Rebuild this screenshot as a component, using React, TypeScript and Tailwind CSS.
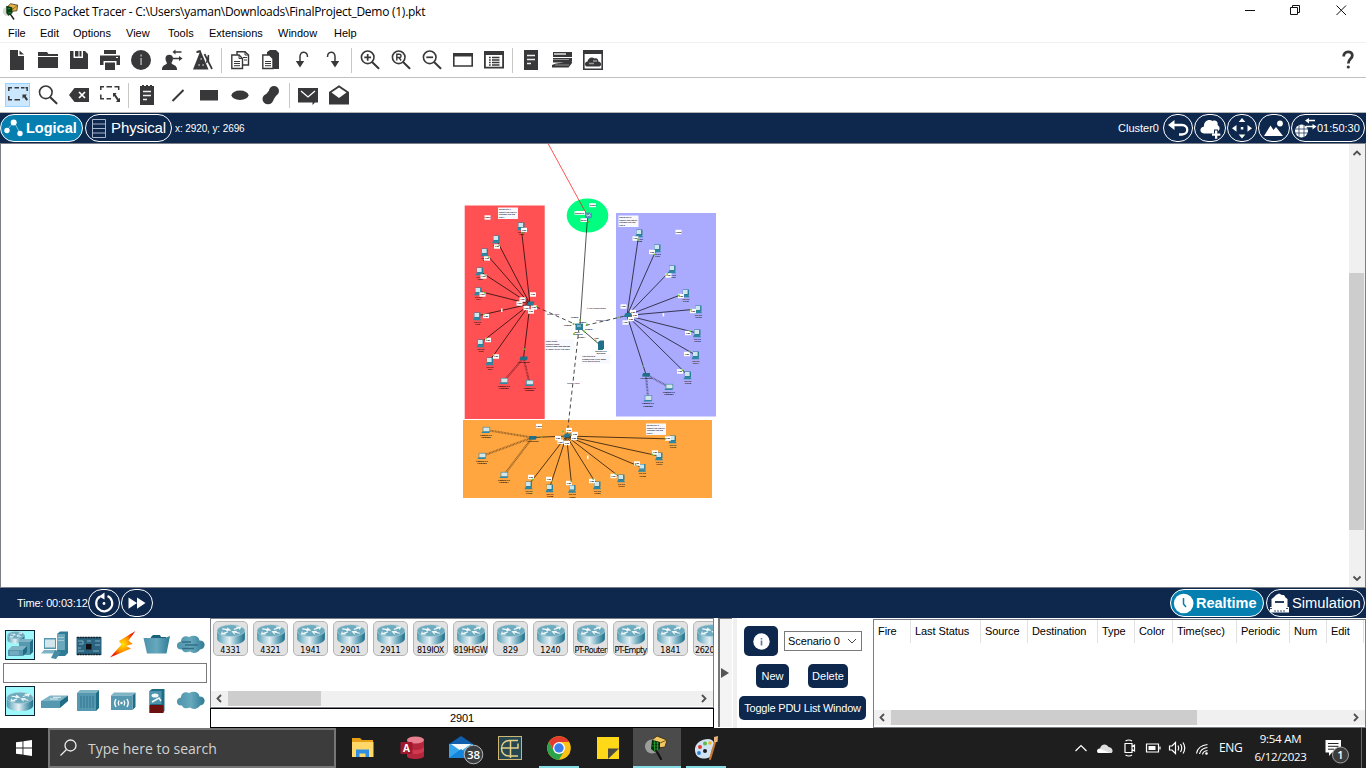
import React from "react";

const INK = "#38383a";

type IconProps = { children: React.ReactNode; className?: string };

/* 31x34 toolbar slot, one drawing unit per pixel */
const Tool = ({ children, className = "" }: IconProps) => (
  <svg className={`h-[34px] w-[31px] shrink-0 ${className}`} viewBox="0 0 31 34" fill={INK}>
    {children}
  </svg>
);

const Sep = () => (
  <div className="flex h-[34px] w-1.5 shrink-0 items-center pl-0.5">
    <div className="h-[25px] w-px bg-[#c8c8c8]" />
  </div>
);

const Lens = ({ children }: { children?: React.ReactNode }) => (
  <Tool>
    <circle cx="12.700" cy="14.300" r="6.300" fill="none" stroke={INK} strokeWidth="1.600" />
    <path d="M17.300 19.300 L23.500 25.300" stroke={INK} strokeWidth="2" strokeLinecap="round" />
    {children}
  </Tool>
);

const menu: [string, string][] = [
  ["File", "w-8"],
  ["Edit", "w-[33px]"],
  ["Options", "w-[53px]"],
  ["View", "w-[42px]"],
  ["Tools", "w-[41px]"],
  ["Extensions", "w-[69px]"],
  ["Window", "w-14"],
  ["Help", "w-10"],
];

const PacketTracerLogo = ({ className }: { className: string }) => (
  <svg className={className} viewBox="0 0 24 24">
    <path d="M8 5 L12 1 L22 3 L21 11 L13 12 Z" fill="#e3b04a" stroke="#2b2210" strokeWidth="1" />
    <path d="M8 5 L16 8 L22 3 M16 8 L13 12" fill="none" stroke="#6b4a10" strokeWidth="0.900" />
    <circle cx="7.500" cy="12" r="6.500" fill="#c4cac4" opacity="0.700" />
    <path d="M6 4 L14 6 L15 14 L9 18 L6 14 Z" fill="#0b3d12" />
    <path d="M8 8 h4 M9 14 h4" stroke="#28c43a" strokeWidth="0.900" />
    <path d="M12 16 L16.500 22.500" stroke="#222" strokeWidth="2.200" strokeLinecap="round" />
  </svg>
);

function TitleBar() {
  return (
    <div className="flex h-[23px] items-center bg-white text-black">
      <PacketTracerLogo className="ml-0.5 h-[17px] w-[17px]" />
      <span className="ml-1 whitespace-nowrap font-['Open_Sans',sans-serif] text-[12px] tracking-[-0.265px]">
        Cisco Packet Tracer - C:\Users\yaman\Downloads\FinalProject_Demo (1).pkt
      </span>
      <svg className="ml-auto h-[23px] w-[130px]" viewBox="0 0 130 23" fill="none" stroke="#111">
        <path d="M9 10.500 H19" />
        <path d="M54.500 7.500 h7 v7 h-7 z M56.500 7.500 v-2 h7 v7 h-2" />
        <path d="M100.500 5.500 L110 15 M110 5.500 L100.500 15" />
      </svg>
    </div>
  );
}

function ToolbarMain() {
  return (
    <div className="flex h-[35px] border-b border-[#c0c0c0] bg-white pl-0.5">
      <Tool>
        <path d="M8 7 H16 V13 H22 V27 H8 Z" />
        <path d="M17.500 7.500 L22 11.500 H17.500 Z" />
      </Tool>
      <Tool>
        <path d="M5 9 H14 L15.500 11 H25 V13 H5 Z M5 14 H25 V25 H5 Z" />
      </Tool>
      <Tool>
        <path d="M6 8 H9.500 V15 H19 V8 H21 L24 11 V26 H6 Z" />
        <path d="M11 8 H14.500 V13.500 H11 Z M15.500 8 H17.500 V13.500 H15.500 Z" />
      </Tool>
      <Tool>
        <path d="M9 7 H21 V11 H9 Z M5 12.500 H25 V22 H21.500 V18 H8.500 V22 H5 Z M10 19.500 H20 V27 H10 Z" />
        <path d="M21 14.500 h2" stroke="#fff" strokeWidth="1.200" />
      </Tool>
      <Tool>
        <circle cx="15" cy="17" r="10" />
        <path d="M14.200 11.500 h1.800 v2 h-1.800z M14.200 15 h1.800 v7 h-1.800z" fill="#999" />
      </Tool>
      <Tool>
        <path d="M8.500 15 C8.500 10.500 16 10.500 16 15 C16 18 14.800 19 14.500 20 C15 22 20 22 20 26 V27 H5 V26 C5 22 9.500 22 10 20 C9.500 19 8.500 18 8.500 15 Z" />
        <path d="M17.500 9 h7 M16 15.500 h7.500" stroke={INK} strokeWidth="1.400" />
        <path d="M18.500 6.500 L15.500 9 L18.500 11.500 Z M22 13 L25.500 15.500 L22 18 Z" />
      </Tool>
      <Tool>
        <path d="M12.500 7.500 L20.500 26.500 H5 Z" />
        <path d="M12.500 7 L8.500 8 V10 L13 9.500 Z" />
        <path d="M16.500 11 L24 26" stroke={INK} strokeWidth="1.700" />
        <path d="M20.500 12 L18.500 20 M20.500 12 V18" stroke={INK} strokeWidth="1.300" fill="none" />
        <path d="M10.500 22 h1.200 M12.500 16 h1.200 M14.500 22 h1.200" stroke="#ddd" strokeWidth="1.300" />
      </Tool>
      <Sep />
      <Tool>
        <g fill="#fff" stroke={INK} strokeWidth="1.400">
          <path d="M12 8.700 H20 L23.500 12 V22 H12 Z" />
          <path d="M6.800 12 H14 L17.500 15.500 V25.500 H6.800 Z" />
          <path d="M14 12 V15.500 H17.500 M20 8.700 V12 H23.500 M9 18.500 h6 M9 20.500 h6 M9 22.700 h6 M18 14.500 h4 M19 17 h3" fill="none" strokeWidth="1" />
        </g>
      </Tool>
      <Tool>
        <path d="M11 9 L14 7 H20 L23 10 V26 H11 Z" />
        <g fill="#fff" stroke={INK} strokeWidth="1.400">
          <path d="M6.800 12 H13.500 L17 15.500 V25.500 H6.800 Z" />
          <path d="M9 18.500 h6 M9 20.500 h6 M9 22.700 h6" strokeWidth="1" />
        </g>
      </Tool>
      <Tool>
        <path d="M20.500 14 C20.500 8 13 7.500 13 13.500 V20" fill="none" stroke={INK} strokeWidth="1.500" />
        <path d="M8.800 18 L13 24.500 L17.200 18 Z" />
      </Tool>
      <Tool>
        <path d="M9.500 14 C9.500 8 17 7.500 17 13.500 V20" fill="none" stroke={INK} strokeWidth="1.500" />
        <path d="M12.800 18 L17 24.500 L21.200 18 Z" />
      </Tool>
      <Sep />
      <Lens>
        <path d="M9.300 14.300 h6.800 M12.700 10.900 v6.800" stroke={INK} strokeWidth="1.700" />
      </Lens>
      <Lens>
        <path d="M10.800 17.500 V11.300 H13.300 C15.700 11.300 15.700 14.500 13.300 14.500 H10.800 M13 14.500 L15.100 17.500" fill="none" stroke={INK} strokeWidth="1.400" />
      </Lens>
      <Lens>
        <path d="M9.300 14.300 h6.800" stroke={INK} strokeWidth="1.700" />
      </Lens>
      <Tool>
        <path d="M5.800 12 V23 H24.200 V12" fill="#fff" stroke={INK} strokeWidth="1.600" />
        <path d="M5 10 H25 V13.500 H5 Z" />
      </Tool>
      <Tool>
        <path d="M5.900 11 V24.700 H24.100 V11 Z" fill="#fff" stroke={INK} strokeWidth="1.800" />
        <path d="M5 8 H25 V12 H5 Z" />
        <path d="M10 14.500 h1.700 M13 14.500 h7.500 M10 17 h1.700 M13 17 h7.500 M10 19.500 h1.700 M13 19.500 h7.500 M10 22 h1.700 M13 22 h7.500" stroke={INK} strokeWidth="1.300" />
      </Tool>
      <Sep />
      <Tool>
        <path d="M8 7 H22 V27 H8 Z" />
        <path d="M11 12.500 h8 M11 16.500 h8 M11 20.500 h4" stroke="#eee" strokeWidth="1.300" />
      </Tool>
      <Tool>
        <path d="M6 9 H25 V14 H6 Z" />
        <path d="M7 11 H19" stroke="#fff" strokeWidth="1.300" />
        <path d="M6 15 H25 V18 L23 19.500 H6 Z M9 20.500 L25 18.500 V20 L21.500 24.500 H5 V22 Z" />
        <path d="M6 16.500 h16 M8 22 h14" stroke="#999" strokeWidth="0.900" />
      </Tool>
      <Tool>
        <path d="M5.800 8 H24.200 V26.200 H5.800 Z" fill="#fff" stroke={INK} strokeWidth="1.600" />
        <path d="M5 7 H25 V11 H5 Z" />
        <path d="M9 23.500 C6 23 6.500 18.500 9.500 18.500 C9.800 15 14 13 16.500 15.500 C19 14.500 20.500 16.500 20.300 18.500 C24 19 24 23.500 21 23.500 Z" />
        <path d="M11 20.500 h5 M15 18 h4" stroke="#999" strokeWidth="1.400" />
      </Tool>
      <svg className="ml-auto mr-[9px] h-[34px] w-[18px]" viewBox="0 0 18 34" fill="none">
        <path d="M4.700 13.500 C4.500 7.500 13.500 7.500 13.300 12.500 C13.300 16 9.300 15.500 9.300 20.500" stroke={INK} strokeWidth="2.800" />
        <circle cx="9.300" cy="24" r="1.600" fill={INK} />
      </svg>
    </div>
  );
}

function ToolbarDraw() {
  return (
    <div className="flex h-[35px] border-b border-[#b4b4b4] bg-white pl-0.5">
      <Tool>
        <rect x="3.500" y="5.500" width="24" height="23" fill="#cce8ff" stroke="#99d1ff" />
        <path d="M6.800 13 V9.800 H10 M12.500 9.800 H17 M19 9.800 H22.500 M23.500 9.800 H25.200 V13 M6.800 18 V21.700 H10 M12.500 21.700 H18" fill="none" stroke={INK} strokeWidth="1.500" />
        <path d="M20.500 16.500 H25 L23.700 18 L26 21.500 L24.300 22.800 L22 19.300 L20.500 20.500 Z" />
      </Tool>
      <Tool>
        <circle cx="12.800" cy="14.300" r="6.300" fill="none" stroke={INK} strokeWidth="1.600" />
        <path d="M17.500 19.500 L23.500 25.300" stroke={INK} strokeWidth="2.100" strokeLinecap="round" />
      </Tool>
      <Tool>
        <path d="M5 17 L10.500 10 H25 V24 H10.500 Z" />
        <path d="M15 14 L21 20 M21 14 L15 20" stroke="#fff" strokeWidth="1.700" />
      </Tool>
      <Tool>
        <path d="M5.800 12 V8.800 H9 M11.500 8.800 H17 M19.500 8.800 H23.700 V12 M5.800 16.500 V20.700 H9 M11.500 20.700 H16" fill="none" stroke={INK} strokeWidth="1.500" />
        <path d="M18 15 H21.500 L20.500 16.300 L23.500 20.800 L25 20 V24 H21 L22.200 22.500 L19.200 18 L18 19 Z" />
      </Tool>
      <Sep />
      <Tool>
        <path d="M8 8 H10 V7 H12 V8 H14 V7 H16 V8 H18 V7 H20 V8 H22 V27 H8 Z" />
        <path d="M11 13.500 h8 M11 17.500 h8 M11 21.500 h4" stroke="#eee" strokeWidth="1.300" />
      </Tool>
      <Tool>
        <path d="M9.500 23 L20.500 12" stroke={INK} strokeWidth="2" />
      </Tool>
      <Tool>
        <rect x="6" y="12" width="18" height="10.500" />
      </Tool>
      <Tool>
        <ellipse cx="15" cy="17.200" rx="8.500" ry="4.700" />
      </Tool>
      <Tool>
        <circle cx="18" cy="13" r="5" />
        <ellipse cx="12" cy="21" rx="5.500" ry="5.200" />
        <path d="M13.500 12 L9 17.500 L16.500 23 L21 16.500 Z" />
      </Tool>
      <Sep />
      <Tool>
        <path d="M5 10 H25 V24.500 H22 L19.500 27 V24.500 H5 Z" />
        <path d="M8 13 L15 19 L22 13" fill="none" stroke="#fff" strokeWidth="1.300" />
      </Tool>
      <Tool>
        <path d="M5 14 L15 7.300 L25 14 V26.500 H5 Z" />
        <path d="M7.500 14.500 L15 9.500 L22.500 14.500 L15 20 Z" fill="#fff" />
      </Tool>
    </div>
  );
}

const pill = "flex shrink-0 items-center rounded-[14px] border border-white";

function NavBar() {
  return (
    <div className="flex h-[30px] items-center bg-[#0d274d] font-['Liberation_Sans',sans-serif] text-white">
      <div className={`${pill} h-7 w-[83px] bg-[#057fb0]`}>
        <svg className="h-6 w-[25px]" viewBox="0 0 25 24">
          <path d="M6 14 L13 6 L19 17" stroke="#fff" strokeWidth="0.700" strokeOpacity="0.700" fill="none" />
          <circle cx="6" cy="14.500" r="2.700" fill="#fff" />
          <circle cx="12.700" cy="6.500" r="3" fill="#fff" />
          <circle cx="19" cy="17.500" r="2.700" fill="#fff" />
        </svg>
        <span className="pt-px text-[14.500px] font-bold">Logical</span>
      </div>
      <div className={`${pill} ml-0.5 h-7 w-[87px]`}>
        <svg className="h-6 w-[25px]" viewBox="0 0 25 24" fill="none" stroke="#b9c5d8">
          <path d="M6.500 3.500 h13 v18 h-13 z M6.500 8 h13 M6.500 12.500 h13 M6.500 17 h13" strokeWidth="0.900" />
        </svg>
        <span className="pt-px text-[15px] tracking-[-0.100px]">Physical</span>
      </div>
      <span className="ml-[3px] text-[10px] tracking-[-0.100px]">x: 2920, y: 2696</span>
      <span className="ml-auto mr-1 text-[11px]">Cluster0</span>
      <div className={`${pill} h-7 w-[30px]`}>
        <svg className="h-6 w-7" viewBox="0 0 28 24">
          <path d="M9 9 H18 C25 9 25 18.500 18 18.500 H15" fill="none" stroke="#fff" strokeWidth="2.300" />
          <path d="M4 9 L10.500 4 V14 Z" fill="#fff" />
        </svg>
      </div>
      <div className={`${pill} ml-px h-7 w-8`}>
        <svg className="h-6 w-[30px]" viewBox="0 0 30 24" fill="#fff">
          <path d="M9 17.500 C4 17 4.500 11 9 10.500 C8.500 5 14 2.500 17.500 5 C21 3.500 23.500 6.500 22.500 9 C25.500 11 25 14 23 15 V13.500 H19 V17.500 Z" />
          <path d="M20 14.500 h2.300 v3 h3 v2.300 h-3 v3 H20 v-3 h-3 v-2.300 h3 z" />
        </svg>
      </div>
      <div className={`${pill} ml-px h-7 w-[30px]`}>
        <svg className="h-6 w-7" viewBox="0 0 28 24" fill="#fff">
          <path d="M14 2 L17.300 6 H10.700 Z M14 22.500 L17.300 18.500 H10.700 Z M4 12.300 L8.500 9 V15.700 Z M24 12.300 L19.500 9 V15.700 Z" />
          <rect x="12.800" y="11" width="2.500" height="2.500" />
        </svg>
      </div>
      <div className={`${pill} ml-px h-7 w-8`}>
        <svg className="h-6 w-[30px]" viewBox="0 0 30 24" fill="#fff">
          <path d="M5 20 L11.500 9.500 L14.500 14 L17 11 L24 20 Z" />
          <circle cx="21" cy="7.500" r="2.900" />
        </svg>
      </div>
      <div className={`${pill} ml-px mr-px h-7 w-[74px]`}>
        <svg className="h-6 w-[25px]" viewBox="0 0 25 24">
          <circle cx="9.500" cy="15" r="6.500" fill="#fff" />
          <path d="M3 13 h13 M3 17 h13 M7 9 v12 M12 9 v12" stroke="#0d274d" strokeWidth="0.700" />
          <path d="M16 4.500 h7 M14 10.500 h8" stroke="#fff" strokeWidth="1.500" />
          <path d="M17 2 L13 4.500 L17 7.500 Z M20.500 8 L24.500 10.500 L20.500 13.500 Z" fill="#fff" />
        </svg>
        <span className="text-[11px]">01:50:30</span>
      </div>
    </div>
  );
}

/* ---------- topology ---------- */
type P = [number, number];

interface Segment {
  hub: P;
  pcs: P[];
  ports: P[];
  cluster: P[];
  sw: P;
  laptops: P[];
  octet: string;
}

const segments: Segment[] = [
  {
    hub: [530, 304],
    pcs: [[521, 226], [496, 239], [484.5, 252], [479.5, 271], [478, 291], [477, 316], [480.5, 343], [489.5, 361]],
    ports: [[524, 230], [497, 246.5], [487, 258.5], [483.5, 276.5], [482.5, 294.5], [486, 316], [488, 340], [496, 356.5]],
    cluster: [[522.5, 299.5], [519.5, 303.5], [526.5, 308], [534, 307.500], [531, 311.5], [533, 294.500]],
    sw: [523.5, 358],
    laptops: [[504, 381], [529.5, 383]],
    octet: "1",
  },
  {
    hub: [627, 315.5],
    pcs: [[639, 233], [657, 248], [672, 269], [685.5, 293], [698, 309], [697, 333], [695.5, 355], [687.5, 375]],
    ports: [[635.5, 238.5], [652, 252], [668.5, 275.5], [681, 296], [693, 311], [688, 333], [687, 354], [680, 371.5]],
    cluster: [[633, 312], [635, 315.5], [625.5, 322.5], [631, 319], [623.500, 306.500]],
    sw: [646, 374.5],
    laptops: [[669, 387], [648, 398.5]],
    octet: "2",
  },
  {
    hub: [566.5, 436],
    pcs: [[672.5, 439], [659, 456], [642, 467.5], [621, 478], [597, 485], [572, 488.5], [549.5, 488], [528.5, 485]],
    ports: [[668, 438.5], [655, 452.5], [637, 463.5], [613.5, 476], [592, 481], [569, 483], [549, 479], [531, 477]],
    cluster: [[558, 438], [560.5, 441.700], [567, 443], [575, 434], [574, 438], [569, 430]],
    sw: [532.5, 437.5],
    laptops: [[486, 430], [482, 456], [504, 475]],
    octet: "3",
  },
];

const tiny = { fontFamily: "Liberation Sans, sans-serif", fontSize: 2.4, fontWeight: 700 };

const Chip = ({ at: [x, y], label = "Fa0" }: { at: P; label?: string }) => (
  <g>
    <rect x={x - 3} y={y - 2.2} width={6} height={4.4} fill="#fff" />
    <text x={x} y={y + 0.9} textAnchor="middle" {...tiny}>{label}</text>
  </g>
);

const Pc = ({ at: [x, y], n }: { at: P; n: number }) => (
  <g>
    <rect x={x - 2.7} y={y - 3.5} width={6.2} height={5.6} fill="#2a8098" />
    <rect x={x - 2.5} y={y - 3} width={4.6} height={4} fill="#cfe6ec" />
    <path d={`M${x - 4} ${y + 4.3} l1 -2.200 h6 l1 2.200 z`} fill="#2f87a3" />
    <text x={x + 0.5} y={y + 6.5} textAnchor="middle" {...tiny}>PC-PT</text>
    <text x={x + 0.5} y={y + 9} textAnchor="middle" {...tiny}>PC{n}</text>
  </g>
);

const Laptop = ({ at: [x, y], n }: { at: P; n: number }) => (
  <g>
    <rect x={x - 3} y={y - 2.8} width={6.8} height={4.6} fill="#d5e6ea" stroke="#4a8fa0" strokeWidth={0.7} />
    <path d={`M${x - 4.8} ${y + 3} l1.500 -1.500 h7.500 l-1 1.500 z`} fill="#2f87a3" />
    <text x={x} y={y + 5.5} textAnchor="middle" {...tiny}>Laptop-PT</text>
    <text x={x} y={y + 8} textAnchor="middle" {...tiny}>Laptop{n}</text>
  </g>
);

const Note = ({ at: [x, y], w, h, lines }: { at: P; w: number; h: number; lines: string[] }) => (
  <g>
    <rect x={x} y={y} width={w} height={h} fill="#f8f8ff" />
    {lines.map((l, i) => (
      <text key={i} x={x + 0.8} y={y + 2.4 + i * 2.6} {...tiny} fontSize={2} fill="#223">{l}</text>
    ))}
  </g>
);

const Dot = ({ at: [x, y] }: { at: P }) => <circle cx={x} cy={y} r={0.9} fill="#58c322" />;

const toward = (a: P, b: P, d: number): P => {
  const l = Math.hypot(b[0] - a[0], b[1] - a[1]);
  return [a[0] + ((b[0] - a[0]) * d) / l, a[1] + ((b[1] - a[1]) * d) / l];
};

const Wire = ({ a, b }: { a: P; b: P }) => (
  <line x1={a[0]} y1={a[1]} x2={b[0]} y2={b[1]} stroke="#000" strokeOpacity={0.72} strokeWidth={0.95} />
);

function SegmentView({ s, base }: { s: Segment; base: number }) {
  return (
    <g>
      {s.pcs.map((p, i) => <Wire key={i} a={p} b={s.hub} />)}
      <Wire a={s.sw} b={s.hub} />
      {s.laptops.map((p, i) => (
        <line key={i} x1={p[0]} y1={p[1]} x2={s.sw[0]} y2={s.sw[1]} stroke="#000" strokeOpacity={0.42} strokeWidth={2.1} strokeDasharray="0.900 0.600" />
      ))}
      {s.laptops.map((p, i) => <Laptop key={i} at={p} n={base / 8 + i} />)}
      {s.pcs.map((p, i) => <Pc key={i} at={p} n={base + i} />)}
      {s.ports.map((p, i) => <Chip key={i} at={p} />)}
      {s.pcs.map((p, i) => <Dot key={i} at={toward(p, s.hub, 7)} />)}
      <Dot at={toward(s.sw, s.hub, 9)} />
      <path d={`M${s.sw[0] - 4} ${s.sw[1] + 2} l1 -3.500 h7 v2.500 l-1 1.200 z`} fill="#1f6f87" />
      <text x={s.sw[0]} y={s.sw[1] + 4.5} textAnchor="middle" {...tiny} fontSize={2}>AccessPoint</text>
      {s.cluster.map((p, i) => <Chip key={i} at={p} />)}
      <path d={`M${s.hub[0] - 3.5} ${s.hub[1] + 1.5} l2 -4 h6 l-1.500 4 z`} fill="#237a94" />
    </g>
  );
}

function Workspace() {
  const note = (n: string) => ["NETWORK " + n, "Subnet 192.168." + n + ".0", "Gateway 192.168", "vlan " + n];
  return (
    <div className="flex h-[445px] border border-[#7b7d87] bg-white">
      <svg className="h-[443px] w-[1348px] shrink-0" viewBox="1 144 1348 443">
        <rect x="464.700" y="205.500" width="80" height="213.500" fill="#ff5053" />
        <rect x="616" y="213" width="100" height="203.500" fill="#aaaaff" />
        <rect x="463" y="420" width="249" height="78" fill="#ffa640" />
        <ellipse cx="587.500" cy="215.500" rx="20.800" ry="17" fill="#00ff80" />
        <line x1="547.800" y1="143" x2="586.500" y2="214" stroke="#f00" strokeOpacity="0.750" strokeWidth="0.900" />
        <line x1="587.500" y1="217" x2="580" y2="325" stroke="#000" strokeOpacity="0.700" strokeWidth="0.950" />
        <g stroke="#333" strokeWidth="0.900" strokeDasharray="4 3">
          <line x1="530" y1="304" x2="579" y2="326" />
          <line x1="579" y1="327" x2="627" y2="315.500" />
          <line x1="579" y1="328" x2="567" y2="436" />
        </g>
        <line x1="579" y1="327" x2="600" y2="345" stroke="#333" strokeWidth="0.900" />
        {segments.map((s, i) => <SegmentView key={s.octet} s={s} base={i * 8} />)}

        <Note at={[498, 207.5]} w={20} h={11.500} lines={note("1")} />
        <Note at={[618.500, 215.5]} w={20} h={11.500} lines={note("2")} />
        <Note at={[646, 423.5]} w={20} h={11.500} lines={note("3")} />
        <Note at={[545, 339.5]} w={29} h={10.5} lines={["Static Route", "Network mask", "Subnet mask 255.255.255", "IP range: DHCP 192.168.1"]} />
        <Note at={[581.500, 354.500]} w={29} h={9} lines={["192.168.100.2", "Domain DNS HTTP Email", "TFTP and services"]} />
        <Chip at={[487.500, 217.500]} label="Lan1" />
        <Chip at={[678.500, 232]} label="Lan2" />
        <Chip at={[539, 426]} label="Lan3" />
        <rect x="501" y="308.500" width="1.500" height="3.500" fill="#fff" />
        <rect x="662.700" y="313" width="1.500" height="3.500" fill="#fff" />
        <rect x="587" y="455.500" width="1.500" height="3.500" fill="#fff" />

        <rect x="574.500" y="211" width="10.500" height="3.800" fill="#fff" />
        <text x="575" y="214" {...tiny}>Router1</text>
        <rect x="589" y="203.200" width="7" height="4" fill="#fff" />
        <text x="589.500" y="206" {...tiny} fontSize={2}>Cluster</text>
        <path d="M585 213.500 q3.500 -2 7 0 v4 q-3.500 2 -7 0 z" fill="#4b8fb5" />
        <path d="M586 215 l5 1 M590.500 213.500 l-3 3" stroke="#dcecf2" strokeWidth="0.700" />
        <rect x="580.500" y="218.200" width="6.500" height="3.800" fill="#fff" />
        <text x="580.800" y="221" {...tiny} fontSize={2.200}>Se0/0</text>
        <Dot at={[588.500, 222]} />

        <rect x="575.500" y="323.500" width="7.500" height="6.500" fill="#2a8098" />
        <path d="M577 327 l4 -2 M577 325 l4 2" stroke="#cfe6ec" strokeWidth="0.600" />
        <path d="M598 342 l2 -1.500 h4 v8 l-1.500 1.500 h-4.500 z" fill="#1f7189" />
        <text x="577" y="332.500" textAnchor="middle" {...tiny}>2911</text>
        <text x="578" y="335" textAnchor="middle" {...tiny}>Router0</text>
        <text x="601" y="351.500" textAnchor="middle" {...tiny}>Server-PT</text>
        <text x="601" y="353.900" textAnchor="middle" {...tiny}>Server0</text>
        <text x="587" y="309" {...tiny} fill="#324">LAN Connection</text>
        <text x="547" y="314.500" {...tiny} fill="#336">Trunk G0/1</text>
        <text x="596" y="321" {...tiny} fill="#336">Trunk G0/2</text>
        <text x="567" y="383.500" {...tiny} fill="#336">Trunk G0/3</text>
        <text x="571" y="317.500" {...tiny}>Gig0/0</text>
        <text x="579" y="322.800" {...tiny}>Gig0/1</text>
        <text x="564" y="326" {...tiny}>Gig0/2</text>
        <text x="585" y="330" {...tiny}>Gig0/3</text>
        <text x="578" y="337.500" {...tiny}>Gig0/4</text>
        <text x="594.500" y="338.500" {...tiny}>Fa0</text>
        {([[580, 320], [573.500, 324], [587, 324.500], [584.500, 331.500], [574, 334], [595.500, 340.500], [537, 306.500], [618, 317.500], [563, 431.500]] as P[]).map((p, i) => (
          <Dot key={i} at={p} />
        ))}
      </svg>
      <div className="flex w-4 flex-1 flex-col bg-[#f0f0f0]">
        <svg className="h-4 w-4" viewBox="0 0 16 16" fill="none" stroke="#505050" strokeWidth="1.800">
          <path d="M4.500 11 L8 7.500 L11.500 11" />
        </svg>
        <div className="mt-[113px] h-[257px] w-[15px] bg-[#cdcdcd]" />
        <svg className="mt-auto h-4 w-4" viewBox="0 0 16 16" fill="none" stroke="#505050" strokeWidth="1.800">
          <path d="M4.500 5.500 L8 9 L11.500 5.500" />
        </svg>
      </div>
    </div>
  );
}

function TimeBar() {
  return (
    <div className="flex h-[30px] items-center bg-[#0d274d] pr-px font-['Liberation_Sans',sans-serif] text-white">
      <span className="ml-[17px] w-[71px] whitespace-nowrap text-[11px] tracking-[-0.170px]">Time: 00:03:12</span>
      <div className={`${pill} h-7 w-8`}>
        <svg className="h-6 w-[30px]" viewBox="0 0 30 24" fill="none">
          <path d="M18.500 5 A8 8 0 1 1 11 5.500" stroke="#fff" strokeWidth="2.200" />
          <path d="M10 5.500 L15.500 1.500 V8.500 Z" fill="#fff" />
          <circle cx="15" cy="12.500" r="1.400" fill="#fff" />
        </svg>
      </div>
      <div className={`${pill} ml-px h-7 w-8`}>
        <svg className="h-6 w-[30px]" viewBox="0 0 30 24" fill="#fff">
          <path d="M6.500 6.500 L15 12 L6.500 17.800 Z M15 6.500 L23.500 12 L15 17.800 Z" />
        </svg>
      </div>
      <div className={`${pill} ml-auto h-7 w-[94px] bg-[#057fb0]`}>
        <svg className="h-6 w-[25px]" viewBox="0 0 25 24">
          <circle cx="12.700" cy="12.500" r="9.800" fill="#fff" />
          <path d="M12.500 7 V13 L15 16" stroke="#057fb0" strokeWidth="1.500" fill="none" />
        </svg>
        <span className="pt-px text-[14.500px] font-bold">Realtime</span>
      </div>
      <div className={`${pill} ml-0.5 h-7 w-[99px]`}>
        <svg className="h-6 w-[25px]" viewBox="0 0 25 24" fill="#fff">
          <path d="M9 4 L12 2.500 L15 4 H17 L18.500 6.500 L20.500 8 V16 H22 V21.500 H3 V16 H4.500 V8 L6.500 6.500 Z" />
          <path d="M8 11 h9" stroke="#0d274d" strokeWidth="1.800" />
          <path d="M3 17.500 h3 M19 17.500 h3 M7 20 h11" stroke="#0d274d" strokeWidth="0.800" strokeDasharray="2 1" />
        </svg>
        <span className="pt-px text-[14.700px]">Simulation</span>
      </div>
    </div>
  );
}

/* ---------- device palette ---------- */
const Gradients = () => (
  <svg className="absolute h-0 w-0">
    <defs>
      <linearGradient id="metal">
        <stop offset="0" stopColor="#4f9ab1" />
        <stop offset="0.250" stopColor="#a9cfdb" />
        <stop offset="0.450" stopColor="#e4f0f4" />
        <stop offset="0.700" stopColor="#7fb4c6" />
        <stop offset="1" stopColor="#1a7089" />
      </linearGradient>
      <linearGradient id="teal">
        <stop offset="0" stopColor="#4c93ab" />
        <stop offset="0.500" stopColor="#67a8bd" />
        <stop offset="1" stopColor="#2d7b94" />
      </linearGradient>
      <radialGradient id="spark">
        <stop offset="0" stopColor="#ffe600" />
        <stop offset="0.600" stopColor="#ff8a00" />
        <stop offset="1" stopColor="#f01a00" />
      </radialGradient>
    </defs>
  </svg>
);

const RouterShape = () => (
  <g>
    <path d="M0.800 7 V15 C0.800 18.500 7 21 15 21 S29.200 18.500 29.200 15 V7 Z" fill="url(#metal)" />
    <ellipse cx="15" cy="6.800" rx="14.200" ry="6" fill="#6eabbf" stroke="#b4d2dc" strokeWidth="0.600" />
    <path d="M6 5 L13 6 M11 4 L14 6.300 L10 6.500 M24 3.500 L18 5.500 M20 3 L25 3 L23.500 5.500 M6 10 L12 8 M6 7.800 L5.500 10.300 L10 10.300 M24 9.500 L17 8 M19 10.500 L16.500 7.800 L21 7.500" fill="none" stroke="#f4fafb" strokeWidth="1.100" />
  </g>
);

const Cell = ({ children, on, w }: { children: React.ReactNode; on?: boolean; w: string }) => (
  <div className={`flex h-[30px] shrink-0 items-center justify-center ${w} ${on ? "border border-[#123] bg-[#9cf8fb]" : ""}`}>
    <svg className="h-7 w-7 shrink-0 overflow-visible" viewBox="0 0 28 28">{children}</svg>
  </div>
);

const Box3d = ({ x, y, w, h, d = 3 }: { x: number; y: number; w: number; h: number; d?: number }) => (
  <g>
    <path d={`M${x} ${y} l${d} ${-d} h${w} l${-d} ${d} z`} fill="#7fb4c5" />
    <path d={`M${x + w} ${y} l${d} ${-d} v${h} l${-d} ${d} z`} fill="#1f6c86" />
    <rect x={x} y={y} width={w} height={h} fill="#5598b0" />
  </g>
);

const cloud = "M5 18.500 C-1 19.500 -2 11 4 10.500 C4 5.500 9 4 12 6 C17 3.500 22 5 22.500 9.500 C29.500 9.500 29 18 23 18.500 C21 22 16 23 13 20.500 C10 22 6 21.500 5 18.500 Z";

function Palette() {
  return (
    <div className="w-[210px] shrink-0 pt-3">
      <div className="flex pl-[5px]">
        <Cell on w="w-[30px]">
          <g transform="translate(1 0) scale(0.600)"><RouterShape /></g>
          <Box3d x={13} y={11} w={11} h={13} />
          <Box3d x={2} y={19} w={15} h={6} d={4} />
          <path d="M4 21 h9 M4 23 h9" stroke="#a9d0dc" strokeWidth="0.700" />
        </Cell>
        <Cell w="w-[40px]">
          <path d="M16 3 L19 0.500 H27 V22 L24 25 H16 Z" fill="#2d7b94" />
          <rect x="16" y="3" width="8" height="16" fill="#6ba8bc" />
          <path d="M3 7 H15 V18 H3 Z" fill="#5598b0" />
          <rect x="4" y="8.500" width="10" height="8" fill="#d3e6ec" />
          <path d="M0 22.500 L3 19 H15 L12 22.500 Z" fill="#7db3c4" />
          <path d="M10 27 L14 19 L20 21 L15 28 Z" fill="#468aa3" />
          <path d="M17 6.500 h6 M17 9.500 h6" stroke="#bcd8e0" strokeWidth="0.700" />
        </Cell>
        <Cell w="w-[28px]">
          <rect x="1.500" y="6" width="25" height="18" fill="#2a6480" />
          <path d="M2 6.500 h24 M2 23.500 h24" stroke="#162028" strokeWidth="1.400" strokeDasharray="2 0.700" />
          <rect x="11" y="13" width="5.500" height="5.500" fill="#111" />
          <path d="M3 10 h5 v3 h-4 M12 10 h4 M20 10 h5 M20 14 h5 M18 20 h6 M3 20 h6 M3 17 h3" stroke="#8ab8c6" strokeWidth="0.900" fill="none" />
        </Cell>
        <Cell w="w-[40px]">
          <path d="M26.500 0 L10 10 L12.500 13.500 L1 26.500 L22 17.500 L17 15 L23.500 13 L19.500 9.500 Z" fill="url(#spark)" />
        </Cell>
        <Cell w="w-[28px]">
          <path d="M8 6 L10 4 H17 L18 6 H23 V22 H5 Z" fill="#1b6079" />
          <path d="M0.500 7 H22 L27 5 L23.500 22.500 H4 Z" fill="url(#teal)" />
        </Cell>
        <Cell w="w-10">
          <path d={cloud} fill="url(#teal)" />
          <path d="M5 11 h9 M8 14 h13 M5 17.500 h12" stroke="#326f86" strokeWidth="1.400" />
        </Cell>
      </div>
      <input aria-label="Device search" className="ml-[3px] mt-[3px] block h-5 w-[204px] rounded-none border border-[#7a7a7a] bg-white" />
      <div className="mt-[3px] flex pl-[5px]">
        <Cell on w="w-[30px]">
          <g transform="translate(0 4.500) scale(0.930)"><RouterShape /></g>
        </Cell>
        <Cell w="w-[40px]">
          <path d="M0 14 L9 8.500 H27 L19 14 Z" fill="#7fb4c5" />
          <path d="M19 14 L27 8.500 V14 L19 21 Z" fill="#1f6c86" />
          <rect x="0" y="14" width="19" height="7" fill="#5598b0" />
          <path d="M9 12 h8 M12 10.300 h8" stroke="#e4f1f5" strokeWidth="1" />
        </Cell>
        <Cell w="w-[28px]">
          <Box3d x={2} y={6} w={19} h={18} d={3} />
          <path d="M6 9 v12 M9 9 v12 M12 9 v12 M15 9 v12 M18 9 v12" stroke="#2d708a" strokeWidth="0.900" />
        </Cell>
        <Cell w="w-[40px]">
          <Box3d x={2} y={8.500} w={21.500} h={14.500} d={3} />
          <path d="M7 12 Q4.500 16 7 20 M10 13.500 Q8.500 16 10 18.500 M15 13.500 Q16.500 16 15 18.500 M18 12 Q20.500 16 18 20" fill="none" stroke="#fff" strokeWidth="1.400" />
          <circle cx="12.500" cy="16" r="1.200" fill="#fff" />
        </Cell>
        <Cell w="w-[28px]">
          <path d="M6.500 4 L9 2 H21.500 V24 L19.500 26 H6.500 Z" fill="#1f6c86" />
          <rect x="6.500" y="4" width="12" height="13" fill="#4c93ad" />
          <path d="M6.500 18 H20.500 V26 H6.500 Z" fill="#6d1010" />
          <ellipse cx="12" cy="8.500" rx="3.500" ry="2" fill="#f3f7f8" />
          <path d="M9 15 L16 11 L18 14" stroke="#f3f7f8" strokeWidth="1.500" fill="none" />
        </Cell>
        <Cell w="w-10">
          <path d={cloud} fill="url(#teal)" />
        </Cell>
      </div>
    </div>
  );
}

const models = ["4331", "4321", "1941", "2901", "2911", "819IOX", "819HGW", "829", "1240", "PT-Router", "PT-Empty", "1841", "2620XM"];

const Chevron = ({ dir }: { dir: "left" | "right" }) => (
  <svg className="h-[15px] w-[17px] shrink-0" viewBox="0 0 17 15" fill="none" stroke="#505050" strokeWidth="1.800">
    <path d={dir === "left" ? "M10 4 L6.500 7.500 L10 11" : "M6 4 L9.500 7.500 L6 11"} />
  </svg>
);

function Devices() {
  return (
    <div className="w-[504px] shrink-0">
      <div className="flex h-[90px] flex-col border border-[#7b7d87] bg-white">
        <div className="flex gap-[5px] overflow-hidden pl-0.5 pt-0.5">
          {models.map((m) => (
            <div key={m} className="flex h-[35px] w-[35px] shrink-0 flex-col items-center rounded-[5px] border border-[#b5b5b5] bg-[#e2e2e2]">
              <svg className="mt-0.5 h-[21px] w-[30px] shrink-0" viewBox="0 0 30 21.500"><RouterShape /></svg>
              <span
                className={`whitespace-nowrap font-['DejaVu_Sans',sans-serif] text-[8px] leading-[11px] text-black ${
                  m.length > 7 ? "tracking-[-0.700px]" : m.length > 5 ? "tracking-[-0.300px]" : ""
                }`}
              >
                {m}
              </span>
            </div>
          ))}
        </div>
        <div className="mb-px mt-auto flex h-[15px] bg-[#f0f0f0]">
          <Chevron dir="left" />
          <div className="w-[93px] bg-[#cdcdcd]" />
          <div className="ml-auto flex"><Chevron dir="right" /></div>
        </div>
      </div>
      <div className="flex h-5 items-center justify-center border border-black text-[11px] tracking-[-0.100px]">2901</div>
    </div>
  );
}

const columns: [string, string][] = [
  ["Fire", "w-[37px]"],
  ["Last Status", "w-[70px]"],
  ["Source", "w-[47px]"],
  ["Destination", "w-[70px]"],
  ["Type", "w-[37px]"],
  ["Color", "w-[38px]"],
  ["Time(sec)", "w-16"],
  ["Periodic", "w-[53px]"],
  ["Num", "w-[37px]"],
  ["Edit", "w-[37px]"],
];

const btn = "flex items-center justify-center rounded-[5px] bg-[#0d274d] text-[11px] text-white";

function Scenario() {
  return (
    <div className="w-[135px] shrink-0 pl-0.5 pt-2">
      <div className="flex items-center pl-[5px]">
        <button className={`${btn} h-[30px] w-[34px]`}>
          <svg className="h-[17px] w-[17px]" viewBox="0 0 17 17">
            <circle cx="8.500" cy="8.500" r="8.200" fill="#fff" />
            <path d="M7.700 5 h1.600 v1.500 h-1.600z M7.700 7.500 h1.600 v5 h-1.600z" fill="#62779a" />
          </svg>
        </button>
        <div className="ml-1.5 flex h-5 w-[78px] items-center border border-[#7a7a7a] bg-white pl-[3px] text-[11px] tracking-[-0.080px]">
          Scenario 0
          <svg className="ml-auto mr-1 h-2 w-2.5" viewBox="0 0 10 8" fill="none" stroke="#444">
            <path d="M1 2 L5 6 L9 2" />
          </svg>
        </div>
      </div>
      <div className="mt-2 flex pl-[17px]">
        <button className={`${btn} h-6 w-[33px]`}>New</button>
        <button className={`${btn} ml-[19px] h-6 w-10`}>Delete</button>
      </div>
      <button className={`${btn} mt-2 h-6 w-[127px] whitespace-nowrap tracking-[-0.200px]`}>Toggle PDU List Window</button>
    </div>
  );
}

function BottomPanel() {
  return (
    <div className="flex h-[110px] bg-white font-['Liberation_Sans',sans-serif] text-black">
      <Palette />
      <Devices />
      <div className="ml-1 flex h-[109px] w-[14px] shrink-0 items-center border-l-2 border-t border-[#777] bg-[#f4f4f4]">
        <svg className="h-3 w-2.5" viewBox="0 0 10 12"><path d="M1 1 L9 6 L1 11 Z" fill="#555" /></svg>
      </div>
      <div className="ml-px h-full w-1 shrink-0 bg-[#f0f0f0]" />
      <Scenario />
      <div className="ml-auto mt-px flex h-[109px] w-[493px] shrink-0 flex-col border border-[#7b7d87]">
        <div className="flex h-[23px] text-[11px]">
          {columns.map(([label, w]) => (
            <div key={label} className={`${w} flex h-[23px] shrink-0 items-center whitespace-nowrap border-r border-[#e2e2e2] pl-1 tracking-[-0.070px]`}>
              {label}
            </div>
          ))}
        </div>
        <div className="mb-0.5 mt-auto flex h-[15px] bg-[#f0f0f0]">
          <Chevron dir="left" />
          <div className="w-[306px] bg-[#cdcdcd]" />
          <div className="ml-auto flex"><Chevron dir="right" /></div>
        </div>
      </div>
    </div>
  );
}

/* ---------- taskbar ---------- */
const Task = ({ children, active, open }: { children: React.ReactNode; active?: boolean; open?: boolean }) => (
  <div className="flex h-10 w-[49px] shrink-0 justify-center">
    <div className={`flex h-10 flex-col items-center ${active ? "w-12 bg-[#4b4b4b]" : "w-10"}`}>
      <svg className="h-[38px] w-10 overflow-visible" viewBox="0 0 40 38">{children}</svg>
      <div className={`h-0.5 w-full ${open || active ? "bg-[#86dce4]" : ""}`} />
    </div>
  </div>
);

function Taskbar() {
  return (
    <div className="flex h-10 bg-[#1e1e1e] font-['Open_Sans',sans-serif] text-white">
      <div className="flex w-12 shrink-0 items-center justify-center">
        <svg className="h-4 w-4" viewBox="0 0 16 16" fill="#fff">
          <path d="M0 2.300 L6.500 1.400 V7.500 H0 Z M7.400 1.200 L16 0 V7.500 H7.400 Z M0 8.400 H6.500 V14.600 L0 13.700 Z M7.400 8.400 H16 V16 L7.400 14.800 Z" />
        </svg>
      </div>
      <div className="flex w-[288px] shrink-0 items-center border-2 border-[#767676] bg-[#3c3c3c]">
        <svg className="ml-[9px] h-5 w-5" viewBox="0 0 20 20" fill="none" stroke="#eee" strokeWidth="1.300">
          <circle cx="11.500" cy="7.500" r="5.500" />
          <path d="M7.500 11.500 L1.500 17.500" />
        </svg>
        <span className="ml-[9px] whitespace-nowrap text-[14px] text-[#d2d2d2]">Type here to search</span>
      </div>
      <div className="ml-0.5 flex">
        <Task>
          <path d="M9 10 H17 L19 12 H30 V16 H9 Z" fill="#e6a117" />
          <path d="M9 14 H30.500 V29 H9 Z" fill="#ffd869" />
          <path d="M13 29 V21.500 H26 V29 H22.500 V25.500 H16.500 V29 Z" fill="#2f8fe0" />
        </Task>
        <Task>
          <path d="M15 12 C15 8 32 8 32 12 V28 C32 32 15 32 15 28 Z" fill="#b5253c" />
          <ellipse cx="23.500" cy="12" rx="8.500" ry="3.500" fill="#e8808f" />
          <path d="M15 19 C17 23 30 23 32 19 V23 C30 27 17 27 15 23 Z" fill="#cf3a50" />
          <rect x="8.500" y="14" width="12" height="12" rx="1" fill="#a0182e" />
          <text x="14.500" y="24" textAnchor="middle" fill="#fff" fontSize="10" fontWeight="700">A</text>
        </Task>
        <Task>
          <path d="M8 16 L20 8 L32 16 Z" fill="#0f5fae" />
          <path d="M8 16 H32 V30 H8 Z" fill="#35a6ee" />
          <path d="M10 16 H30 L20 23 Z" fill="#f4f8fb" />
          <path d="M8 30 L20 21 L32 30 Z" fill="#1684d8" />
          <circle cx="32.500" cy="26.500" r="9.300" fill="#3a3f44" stroke="#b8b8b8" strokeWidth="1" />
          <text x="32.500" y="31" textAnchor="middle" fill="#fff" fontSize="11.500" fontWeight="600">38</text>
        </Task>
        <Task>
          <rect x="8.500" y="8.500" width="23" height="23" fill="#26474f" stroke="#cdb673" />
          <path d="M28 12.500 H19 C9 13 9 28 19 28 H28 M20.500 12.500 V30 M20.500 20 H28 V15.500 M12 20 H20" fill="none" stroke="#e6cf86" strokeWidth="1.500" />
        </Task>
        <Task open>
          <circle cx="20" cy="20" r="11.800" fill="#fbc116" />
          <path d="M9.800 14.100 A11.800 11.800 0 0 1 30.200 14.100 L20 14.100 Z" fill="#e33b2e" />
          <path d="M9.800 14.100 L15 23 L20 14.100 Z" fill="#e33b2e" />
          <path d="M9.800 14.100 A11.800 11.800 0 0 0 20 31.800 L25.100 23 L20 26 L14.900 23 Z" fill="#2ba24c" />
          <circle cx="20" cy="20" r="6" fill="#fff" />
          <circle cx="20" cy="20" r="4.700" fill="#3b7ded" />
        </Task>
        <Task>
          <path d="M9 9 H31 V31 H9 Z" fill="#ffd817" />
          <path d="M20 31 V20.500 H31 Z" fill="#4a4a40" />
        </Task>
        <Task active>
          <g transform="translate(8 8)">
            <path d="M7 4 L12 0 L22 4 L20 11 L13 12 Z" fill="#f1c665" stroke="#3a2a10" strokeWidth="0.900" />
            <path d="M7 4 L15 7 L22 4" fill="none" stroke="#6b4a10" strokeWidth="0.900" />
            <circle cx="7" cy="10.500" r="7" fill="#a9ada9" opacity="0.850" />
            <path d="M7 4 L15 6 L15 13 L10 16 L6 13 Z" fill="#062c0a" />
            <path d="M8 7 h6 M7 10 h7 M9 13 h5 M9.500 5 v10 M12.500 6 v8" stroke="#28c43a" strokeWidth="0.600" />
            <path d="M12 16 L16 23" stroke="#111" strokeWidth="2.200" strokeLinecap="round" />
          </g>
        </Task>
        <Task open>
          <path d="M9 23 C8 15 16 11 22 11 C28 11 30 17 27 20 C24 22 28 26 24 29 C18 32 10 31 9 23 Z" fill="#cfe3f2" />
          <circle cx="14" cy="19" r="2" fill="#e5382c" />
          <circle cx="19" cy="15.500" r="2" fill="#5bb947" />
          <circle cx="24" cy="15" r="1.800" fill="#f0b428" />
          <circle cx="13" cy="25" r="1.900" fill="#2d7cd6" />
          <circle cx="19" cy="23" r="2" fill="#1e1e1e" />
          <path d="M30 11 L24 31" stroke="#c8772d" strokeWidth="2.200" strokeLinecap="round" />
          <path d="M28 9 L32 8 L31.500 14 L28 14 Z" fill="#e7b57b" />
        </Task>
      </div>
      <div className="ml-auto flex items-center">
        <svg className="h-10 w-[147px]" viewBox="1068 0 147 40" fill="none" stroke="#fff" strokeWidth="1.200">
          <path d="M1075.500 23 L1081 17.500 L1086.500 23" />
          <path d="M1098.500 25 C1096 24 1097 20 1100 20.500 C1101 15.500 1107 15.500 1108.500 19 C1112 19 1114 23.500 1111.500 25 Z" fill="#dedede" stroke="none" />
          <path d="M1098.500 25 C1096 24 1098 20 1101 21 L1110 25 Z" fill="#fff" stroke="none" />
          <path d="M1125 15.500 h7 v9 h-7 z M1132 18.500 l2.500 -1.500 v6 l-2.500 -1.500 M1125.500 13 Q1129 11 1132 13 M1125.500 27 Q1129 29 1132 27" />
          <path d="M1146.500 16 h12 v8 h-12 z M1160 18.500 v3" />
          <path d="M1148.500 18 h7 v4 h-7 z" fill="#fff" stroke="none" />
          <path d="M1169.500 18 h2.500 l3.500 -3.500 v11 l-3.500 -3.500 h-2.500 z M1178 17.500 q1.500 2.500 0 5 M1180.500 16 q2.500 4 0 8 M1183 14.500 q3.500 5.500 0 11" />
          <path d="M1196.500 25.500 Q1198 17.500 1207.500 16.500 M1199.500 26 Q1200.500 20.500 1207.500 19.500 M1202.500 26.500 Q1203 23 1207.500 22.500" />
          <circle cx="1206.500" cy="25.500" r="1.300" fill="#fff" stroke="none" />
        </svg>
        <span className="w-[31px] pl-1 text-[12px] tracking-[-0.400px]">ENG</span>
        <div className="flex w-[68px] flex-col items-center whitespace-nowrap pl-px text-[11.500px] leading-[18px] tracking-[-0.250px]">
          <span>9:54 AM</span>
          <span>6/12/2023</span>
        </div>
        <svg className="h-10 w-[52px]" viewBox="1314 0 52 40">
          <path d="M1325.500 12 H1341 V24.500 H1332 L1329 28 V24.500 H1325.500 Z" fill="#fff" />
          <path d="M1328 15.500 h10.500 M1328 18.300 h10.500 M1328 21.200 h6" stroke="#222" strokeWidth="1" />
          <circle cx="1340.500" cy="27" r="8" fill="#3c3c3c" stroke="#a0a0a0" />
          <text x="1340.500" y="31" textAnchor="middle" fill="#fff" fontSize="11" fontWeight="600">1</text>
          <path d="M1361.500 0 V40" stroke="#666" />
        </svg>
      </div>
    </div>
  );
}

export default function App() {
  return (
    <div className="relative flex h-[768px] w-[1366px] flex-col overflow-hidden bg-white">
      <Gradients />
      <TitleBar />
      <div className="flex h-5 items-center border-b border-[#f0f0f0] pl-2 pt-0.5 font-['Liberation_Sans',sans-serif] text-[11px] text-black">
        {menu.map(([label, w]) => (
          <span key={label} className={`${w} shrink-0 whitespace-nowrap`}>{label}</span>
        ))}
      </div>
      <ToolbarMain />
      <ToolbarDraw />
      <NavBar />
      <Workspace />
      <TimeBar />
      <BottomPanel />
      <Taskbar />
    </div>
  );
}
